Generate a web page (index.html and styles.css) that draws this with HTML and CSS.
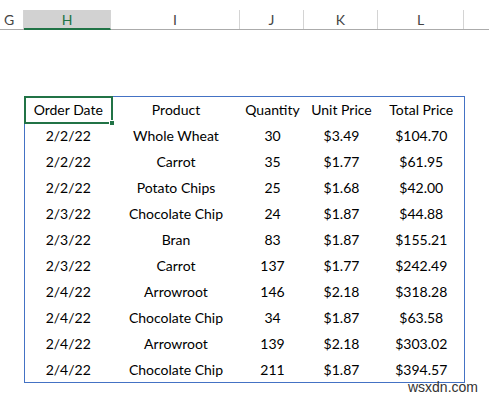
FILE: index.html
```html
<!DOCTYPE html>
<html lang="en">
  <head>
    <meta charset="UTF-8" />
    <meta name="viewport" content="width=device-width, initial-scale=1.0" />
    <title>Sheet</title>
    <link rel="stylesheet" href="styles.css">
  </head>
  <body>
    <header class="col-heads">
      <div class="col-head col-g">G</div>
      <div class="col-head col-h active">H</div>
      <div class="col-head col-i">I</div>
      <div class="col-head col-j">J</div>
      <div class="col-head col-k">K</div>
      <div class="col-head col-l">L</div>
      <div class="col-head col-m"></div>
    </header>
    <main class="sheet">
      <table class="data">
        <colgroup>
          <col class="w-h" />
          <col class="w-i" />
          <col class="w-j" />
          <col class="w-k" />
          <col class="w-l" />
        </colgroup>
        <thead>
          <tr>
            <th class="selected">Order Date<span class="handle"></span></th>
            <th>Product</th>
            <th>Quantity</th>
            <th>Unit Price</th>
            <th>Total Price</th>
          </tr>
        </thead>
        <tbody>
          <tr><td>2/2/22</td><td>Whole Wheat</td><td>30</td><td>$3.49</td><td>$104.70</td></tr>
          <tr><td>2/2/22</td><td>Carrot</td><td>35</td><td>$1.77</td><td>$61.95</td></tr>
          <tr><td>2/2/22</td><td>Potato Chips</td><td>25</td><td>$1.68</td><td>$42.00</td></tr>
          <tr><td>2/3/22</td><td>Chocolate Chip</td><td>24</td><td>$1.87</td><td>$44.88</td></tr>
          <tr><td>2/3/22</td><td>Bran</td><td>83</td><td>$1.87</td><td>$155.21</td></tr>
          <tr><td>2/3/22</td><td>Carrot</td><td>137</td><td>$1.77</td><td>$242.49</td></tr>
          <tr><td>2/4/22</td><td>Arrowroot</td><td>146</td><td>$2.18</td><td>$318.28</td></tr>
          <tr><td>2/4/22</td><td>Chocolate Chip</td><td>34</td><td>$1.87</td><td>$63.58</td></tr>
          <tr><td>2/4/22</td><td>Arrowroot</td><td>139</td><td>$2.18</td><td>$303.02</td></tr>
          <tr><td>2/4/22</td><td>Chocolate Chip</td><td>211</td><td>$1.87</td><td>$394.57</td></tr>
        </tbody>
      </table>
    </main>
    <div class="watermark">wsxdn.com</div>
  </body>
</html>
```

FILE: styles.css
```css
html {
  box-sizing: border-box;
  font-family: Lato, "Liberation Sans", sans-serif;
  font-size: 14px;
}

*,
*:before,
*:after {
  box-sizing: inherit;
}

body {
  margin: 0;
  height: 400px;
  background-color: #fff;
  color: #000;
  position: relative;
  overflow: hidden;
}

.col-heads {
  display: flex;
  margin-top: 10px;
  height: 20px;
  border-bottom: 1px solid #ababab;
}

.col-head {
  height: 19px;
  line-height: 19px;
  text-align: center;
  color: #444;
  font-size: 14px;
  border-right: 1px solid #d4d4d4;
}

.col-g { width: 24px; text-align: left; padding-left: 4px; }
.col-h { width: 87px; }
.col-i { width: 129px; }
.col-j { width: 64px; }
.col-k { width: 74px; }
.col-l { width: 86px; }
.col-m { flex-grow: 1; border-right: none; }

.col-head.active {
  background-color: #d2d2d2;
  color: #217346;
  height: 20px;
  border-bottom: 2px solid #217346;
}

.sheet {
  padding: 66px 0 0 24px;
}

.data {
  border-collapse: collapse;
  border: 1px solid #4472c4;
  table-layout: fixed;
  width: 441px;
}

.w-h { width: 87px; }
.w-i { width: 129px; }
.w-j { width: 64px; }
.w-k { width: 74px; }
.w-l { width: 86px; }

.data th,
.data td {
  height: 26px;
  padding: 0;
  text-align: center;
  font-weight: normal;
  font-size: 14px;
  white-space: nowrap;
}

.data th.selected {
  position: relative;
  outline: 2px solid #217346;
  outline-offset: -1px;
}

.handle {
  position: absolute;
  right: -3px;
  bottom: -3px;
  width: 6px;
  height: 6px;
  background-color: #217346;
  border: 1px solid #fff;
}

.watermark {
  position: absolute;
  right: 11px;
  bottom: 5px;
  font-family: "Liberation Sans", sans-serif;
  font-size: 14px;
  color: #333;
}
```
